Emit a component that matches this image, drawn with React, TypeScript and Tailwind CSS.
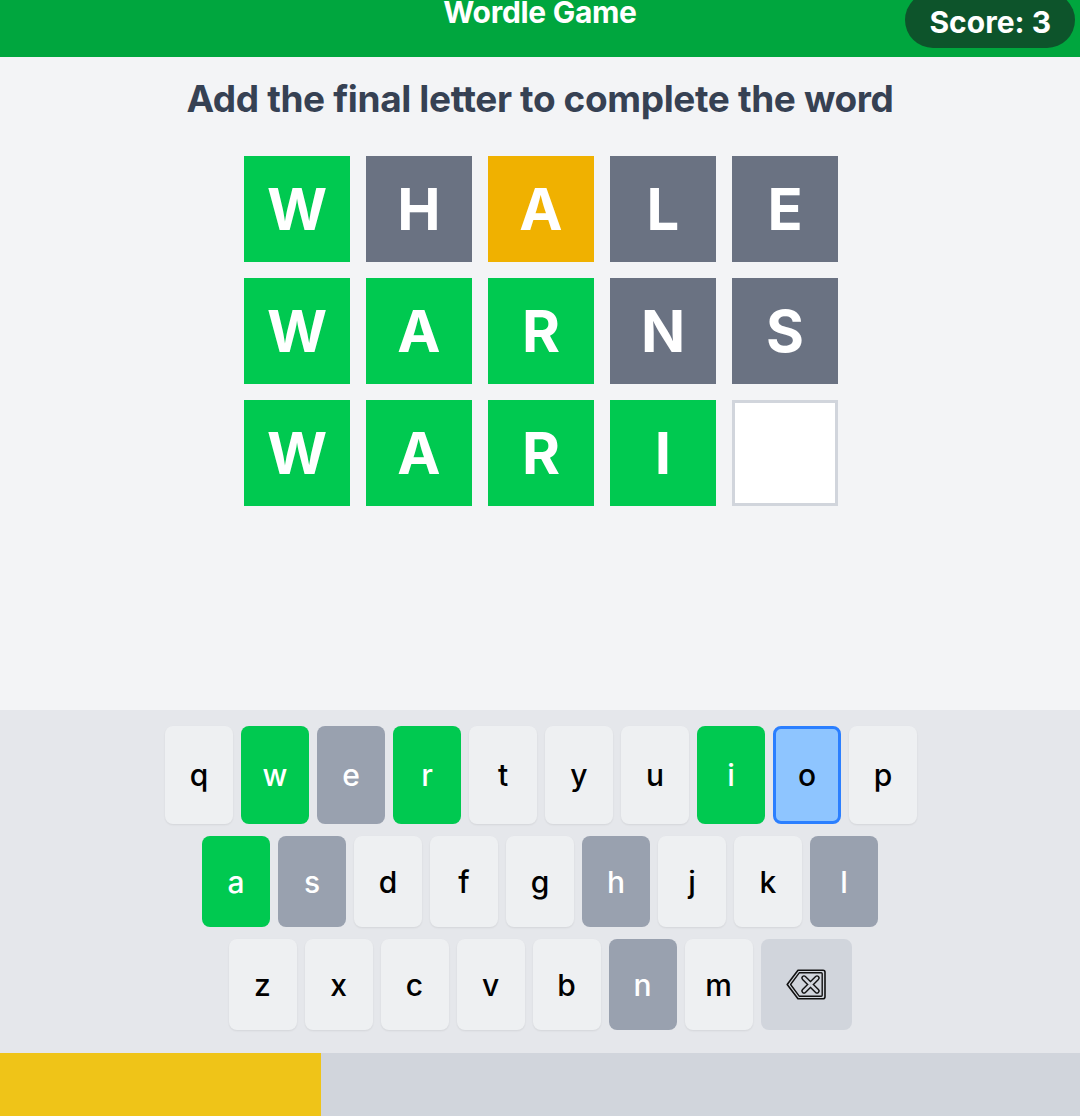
type TileState = 'correct' | 'present' | 'absent' | 'empty';

interface Tile {
  letter: string;
  state: TileState;
}

const rows: Tile[][] = [
  [
    { letter: 'W', state: 'correct' },
    { letter: 'H', state: 'absent' },
    { letter: 'A', state: 'present' },
    { letter: 'L', state: 'absent' },
    { letter: 'E', state: 'absent' },
  ],
  [
    { letter: 'W', state: 'correct' },
    { letter: 'A', state: 'correct' },
    { letter: 'R', state: 'correct' },
    { letter: 'N', state: 'absent' },
    { letter: 'S', state: 'absent' },
  ],
  [
    { letter: 'W', state: 'correct' },
    { letter: 'A', state: 'correct' },
    { letter: 'R', state: 'correct' },
    { letter: 'I', state: 'correct' },
    { letter: '', state: 'empty' },
  ],
];

type KeyState = 'correct' | 'absent' | 'idle' | 'active';

const keyStates: Record<string, KeyState> = {
  w: 'correct',
  e: 'absent',
  r: 'correct',
  i: 'correct',
  o: 'active',
  a: 'correct',
  s: 'absent',
  h: 'absent',
  l: 'absent',
  n: 'absent',
};

const keyRows = [
  ['q', 'w', 'e', 'r', 't', 'y', 'u', 'i', 'o', 'p'],
  ['a', 's', 'd', 'f', 'g', 'h', 'j', 'k', 'l'],
  ['z', 'x', 'c', 'v', 'b', 'n', 'm'],
];

function tileClass(state: TileState) {
  switch (state) {
    case 'correct':
      return 'bg-[#00c950] text-white';
    case 'present':
      return 'bg-[#f0b100] text-white';
    case 'absent':
      return 'bg-[#6a7282] text-white';
    case 'empty':
    default:
      return 'bg-white border-[3px] border-[#d1d5dc]';
  }
}

function keyClass(state: KeyState) {
  switch (state) {
    case 'correct':
      return 'bg-[#00c950] text-white';
    case 'absent':
      return 'bg-[#99a1af] text-white';
    case 'active':
      return 'bg-[#8ec5ff] text-black border-[3px] border-[#2b7fff]';
    case 'idle':
    default:
      return 'bg-[#eef0f2] text-black shadow-[0_1px_2px_rgba(0,0,0,0.08)]';
  }
}

function BackspaceIcon() {
  return (
    <svg width="40" height="31" viewBox="0 0 40 31" fill="none">
      <path
        d="M12 1.2 H37 a2 2 0 0 1 2 2 V27.8 a2 2 0 0 1 -2 2 H12 L1.2 15.5 Z"
        stroke="#111"
        strokeWidth="1.6"
        strokeLinejoin="round"
      />
      <path
        d="M13.2 3.8 H35.2 a1 1 0 0 1 1 1 V26.2 a1 1 0 0 1 -1 1 H13.2 L4.6 15.5 Z"
        stroke="#111"
        strokeWidth="1.4"
        strokeLinejoin="round"
      />
      <path d="M18 9 L31 22 M31 9 L18 22" stroke="#111" strokeWidth="5.4" strokeLinecap="round" />
      <path d="M18 9 L31 22 M31 9 L18 22" stroke="#d1d5dc" strokeWidth="2.6" strokeLinecap="round" />
    </svg>
  );
}

export default function App() {
  return (
    <div className="w-[1080px] h-[1116px] flex flex-col bg-[#f3f4f6] overflow-hidden font-['Inter',_'Liberation_Sans',_sans-serif]">
      {/* Header */}
      <header className="relative h-[57px] shrink-0 bg-[#00a63e] flex justify-center">
        <h1 className="-mt-[3px] text-[30px] leading-none font-bold text-white tracking-[-0.01em]">
          Wordle Game
        </h1>
        <div className="absolute right-[5px] -top-[8px] h-[56px] px-6 rounded-full bg-[#0d542b] flex items-center">
          <span className="pt-[4px] text-[30px] font-bold text-white leading-none">Score: 3</span>
        </div>
      </header>

      {/* Board */}
      <main className="h-[653px] shrink-0 flex flex-col items-center pt-[20px]">
        <p className="text-[37px] leading-[44px] font-bold text-[#364153] tracking-[-0.01em]">
          Add the final letter to complete the word
        </p>
        <div className="mt-[35px] flex flex-col gap-4 pl-[2px]">
          {rows.map((row, r) => (
            <div key={r} className="flex gap-4">
              {row.map((tile, c) => (
                <div
                  key={c}
                  className={`w-[106px] h-[106px] flex items-center justify-center text-[58px] font-bold leading-none ${tileClass(tile.state)}`}
                >
                  {tile.letter}
                </div>
              ))}
            </div>
          ))}
        </div>
      </main>

      {/* Keyboard */}
      <section className="h-[343px] shrink-0 bg-[#e5e7eb] flex flex-col items-center pt-4 gap-3">
        {keyRows.map((row, r) => (
          <div key={r} className={`flex gap-2 ${r === 0 ? 'h-[98px] pl-[2px]' : 'h-[91px]'}`}>
            {row.map((k) => (
              <div
                key={k}
                className={`w-[68px] h-full rounded-lg flex items-center justify-center text-[30px] font-medium leading-none ${keyClass(keyStates[k] ?? 'idle')}`}
              >
                {k}
              </div>
            ))}
            {r === 2 && (
              <div className="w-[91px] h-full rounded-lg bg-[#d1d5dc] flex items-center justify-center">
                <BackspaceIcon />
              </div>
            )}
          </div>
        ))}
      </section>

      {/* Timer bar */}
      <div className="flex-1 bg-[#d1d5dc] flex">
        <div className="h-full bg-[#efc418]" style={{ width: '321px' }} />
      </div>
    </div>
  );
}
